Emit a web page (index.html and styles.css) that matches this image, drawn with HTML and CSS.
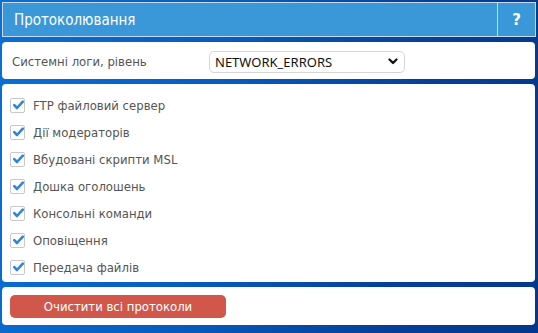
FILE: index.html
```html
<!DOCTYPE html>
<html>
<head>
<meta charset="utf-8">
<link rel="stylesheet" href="styles.css">
</head>
<body>
<div class="wrap">
  <div class="header">
    <div class="title">Протоколювання</div>
    <div class="help">?</div>
  </div>
  <div class="panel level">
    <span class="lbl">Системні логи, рівень</span>
    <div class="select">
      <span>NETWORK_ERRORS</span>
      <svg class="chev" width="10" height="7" viewBox="0 0 10 7"><path d="M1.5 1.5 L5 5 L8.5 1.5" fill="none" stroke="#111" stroke-width="2.2" stroke-linecap="round" stroke-linejoin="round"/></svg>
    </div>
  </div>
  <div class="panel list">
    <label class="row"><span class="cb"><svg width="11" height="10" viewBox="0 0 11 10"><path d="M1.3 5.2 L4 8 L9.8 1.6" fill="none" stroke="#2f86d4" stroke-width="2.6" stroke-linecap="round" stroke-linejoin="round"/></svg></span>FTP файловий сервер</label>
    <label class="row"><span class="cb"><svg width="11" height="10" viewBox="0 0 11 10"><path d="M1.3 5.2 L4 8 L9.8 1.6" fill="none" stroke="#2f86d4" stroke-width="2.6" stroke-linecap="round" stroke-linejoin="round"/></svg></span>Дії модераторів</label>
    <label class="row"><span class="cb"><svg width="11" height="10" viewBox="0 0 11 10"><path d="M1.3 5.2 L4 8 L9.8 1.6" fill="none" stroke="#2f86d4" stroke-width="2.6" stroke-linecap="round" stroke-linejoin="round"/></svg></span>Вбудовані скрипти MSL</label>
    <label class="row"><span class="cb"><svg width="11" height="10" viewBox="0 0 11 10"><path d="M1.3 5.2 L4 8 L9.8 1.6" fill="none" stroke="#2f86d4" stroke-width="2.6" stroke-linecap="round" stroke-linejoin="round"/></svg></span>Дошка оголошень</label>
    <label class="row"><span class="cb"><svg width="11" height="10" viewBox="0 0 11 10"><path d="M1.3 5.2 L4 8 L9.8 1.6" fill="none" stroke="#2f86d4" stroke-width="2.6" stroke-linecap="round" stroke-linejoin="round"/></svg></span>Консольні команди</label>
    <label class="row"><span class="cb"><svg width="11" height="10" viewBox="0 0 11 10"><path d="M1.3 5.2 L4 8 L9.8 1.6" fill="none" stroke="#2f86d4" stroke-width="2.6" stroke-linecap="round" stroke-linejoin="round"/></svg></span>Оповіщення</label>
    <label class="row"><span class="cb"><svg width="11" height="10" viewBox="0 0 11 10"><path d="M1.3 5.2 L4 8 L9.8 1.6" fill="none" stroke="#2f86d4" stroke-width="2.6" stroke-linecap="round" stroke-linejoin="round"/></svg></span>Передача файлів</label>
  </div>
  <div class="panel actions">
    <button class="btn">Очистити всі протоколи</button>
  </div>
</div>
</body>
</html>
```
FILE: styles.css
```css
html, body {
  margin: 0;
  padding: 0;
  height: 100%;
}
body {
  background: linear-gradient(100deg, #0a6fd6 0%, #075bbd 40%, #053f98 75%, #03388c 100%);
  font-family: "DejaVu Sans Condensed", "DejaVu Sans", sans-serif;
  overflow: hidden;
}
.wrap {
  padding: 2px 2px 0 2px;
  display: flex;
  flex-direction: column;
  gap: 5px;
}
.header {
  height: 33px;
  background: #3a98d8;
  border: 1px solid #c9d9e6;
  display: flex;
  align-items: stretch;
}
.title {
  flex: 1;
  color: #fff;
  font-family: "DejaVu Sans Condensed", "DejaVu Sans", sans-serif;
  font-size: 15px;
  display: flex;
  align-items: center;
  padding-left: 11px;
  border-right: 1px solid #c9d9e6;
}
.help {
  width: 37px;
  color: #fff;
  font-weight: bold;
  font-family: "DejaVu Sans", sans-serif;
  font-size: 15px;
  display: flex;
  align-items: center;
  justify-content: center;
}
.panel {
  background: #fff;
  border-radius: 4px;
  margin-right: 1px;
}
.level {
  height: 37px;
  display: flex;
  align-items: center;
  padding-left: 10px;
  padding-top: 2px;
  box-sizing: border-box;
}
.lbl {
  width: 197px;
  color: #555;
  font-size: 13px;
}
.select {
  width: 183px;
  height: 20px;
  border: 1px solid #d6d6d6;
  border-radius: 5px;
  display: flex;
  align-items: center;
  justify-content: space-between;
  padding: 0 6px 0 5px;
  font-family: "Noto Sans", sans-serif;
  font-size: 13px;
  color: #111;
}
.list {
  height: 198px;
  padding: 8px 8px 0 8px;
  box-sizing: border-box;
  display: flex;
  flex-direction: column;
}
.row {
  height: 27px;
  display: flex;
  align-items: center;
  color: #555;
  font-size: 13px;
}
.cb {
  width: 13px;
  height: 13px;
  border: 1px solid #c8c8c8;
  border-radius: 2px;
  margin-right: 8px;
  position: relative;
  background: #fff;
}
.cb svg {
  position: absolute;
  left: 2px;
  top: 1px;
}
.actions {
  height: 38px;
  display: flex;
  align-items: center;
  padding-left: 8px;
}
.btn {
  width: 216px;
  height: 23px;
  border: none;
  border-radius: 5px;
  background: #d2574b;
  color: #fff;
  font-family: "DejaVu Sans Condensed", "DejaVu Sans", sans-serif;
  font-size: 13px;
  padding: 0;
}
```
